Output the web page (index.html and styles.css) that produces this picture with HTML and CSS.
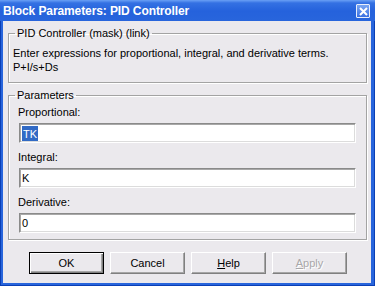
FILE: index.html
```html
<!DOCTYPE html>
<html lang="en">
<head>
    <meta charset="UTF-8">
    <title>Block Parameters: PID Controller</title>
    <link rel="stylesheet" href="styles.css">
</head>
<body>
    <div class="window">
        <!-- Title bar -->
        <div class="titlebar">
            <span class="title">Block Parameters: PID Controller</span>
            <span class="close">
                <svg width="9" height="9" viewBox="0 0 9 9">
                    <path d="M1 1 L8 8 M8 1 L1 8" stroke="#fff" stroke-width="2" />
                </svg>
            </span>
        </div>

        <div class="client">
            <fieldset class="group desc">
                <legend>PID Controller (mask) (link)</legend>
                <p>Enter expressions for proportional, integral, and derivative terms.</p>
                <p>P+I/s+Ds</p>
            </fieldset>

            <fieldset class="group params">
                <legend>Parameters</legend>
                <label>Proportional:</label>
                <div class="edit"><span class="sel">TK</span></div>
                <label>Integral:</label>
                <div class="edit">K</div>
                <label>Derivative:</label>
                <div class="edit">0</div>
            </fieldset>

            <div class="buttons">
                <button class="btn default">OK</button>
                <button class="btn">Cancel</button>
                <button class="btn"><u>H</u>elp</button>
                <button class="btn disabled"><u>A</u>pply</button>
            </div>
        </div>
    </div>
</body>
</html>
```

FILE: styles.css
```css
body {
    margin: 0;
    font-family: 'Liberation Sans', Arial, sans-serif;
    font-size: 11px;
    color: #000;
}

.window {
    width: 375px;
    height: 286px;
    box-sizing: border-box;
    display: flex;
    flex-direction: column;
    background-color: #2865dc;
    box-shadow: inset 1px 0 0 #0b3fb5, inset -1px -1px 0 #0b3fb5;
}

.titlebar {
    height: 21px;
    flex-shrink: 0;
    display: flex;
    align-items: center;
    justify-content: space-between;
    padding: 0 5px 0 3px;
    background: linear-gradient(#6aa0f5 0, #3471e3 3px, #2562dc 11px, #2865dc 21px);
}

.title {
    color: #fff;
    font-weight: bold;
    font-size: 12px;
    letter-spacing: -0.1px;
    padding-top: 1px;
}

.close {
    width: 12px;
    height: 12px;
    margin-top: 1px;
    display: flex;
    align-items: center;
    justify-content: center;
    border: 1px solid #e8eefb;
    border-radius: 1px;
    background: linear-gradient(#7aa6f2, #3a70e2);
}

.client {
    flex-grow: 1;
    margin: 0 4px 3px 3px;
    padding: 6px 4px 0 5px;
    background-color: #ebe9ed;
}

.group {
    margin: 0;
    border: 1px solid #a3a3a3;
    box-shadow: 1px 1px 0 #fff, inset 1px 1px 0 #fff;
}

.group legend {
    line-height: 13px;
    padding: 0 2px;
}

.desc {
    padding: 6px 4px 8px 4px;
}

.desc legend {
    margin-left: 2px;
}

.desc p {
    margin: 0;
    line-height: 14px;
}

.params {
    margin-top: 6px;
    padding: 3px 10px 6px 9px;
}

.params legend {
    margin-left: -3px;
}

.params label {
    display: block;
    line-height: 14px;
    margin-bottom: 4px;
}

.edit {
    height: 20px;
    box-sizing: border-box;
    margin: 0 0 7px 1px;
    padding: 0 0 0 2px;
    display: flex;
    align-items: center;
    background-color: #fff;
    border: 1px solid;
    border-color: #8a8a8a #fff #fff #8a8a8a;
    box-shadow: inset 1px 1px 0 #a8a8a8, inset -1px -1px 0 #dcdcdc;
}

.edit:last-child {
    margin-bottom: 0;
}

.sel {
    background-color: #316ac5;
    color: #fff;
    padding: 2px 1px 1px 1px;
}

.buttons {
    display: flex;
    gap: 6px;
    margin-top: 12px;
    padding-left: 21px;
}

.btn {
    width: 75px;
    height: 22px;
    padding: 0;
    font-family: 'Liberation Sans', Arial, sans-serif;
    font-size: 11px;
    color: #000;
    background-color: #ebe9ed;
    border: 1px solid;
    border-color: #fff #808080 #808080 #fff;
    box-shadow: inset -1px -1px 0 #a6a6a6;
}

.btn.default {
    border-color: #000;
    box-shadow: inset 1px 1px 0 #fff, inset -1px -1px 0 #808080, inset -2px -2px 0 #a6a6a6;
}

.btn.disabled {
    color: #a9a7a9;
    text-shadow: 1px 1px 0 #fff;
}
```
